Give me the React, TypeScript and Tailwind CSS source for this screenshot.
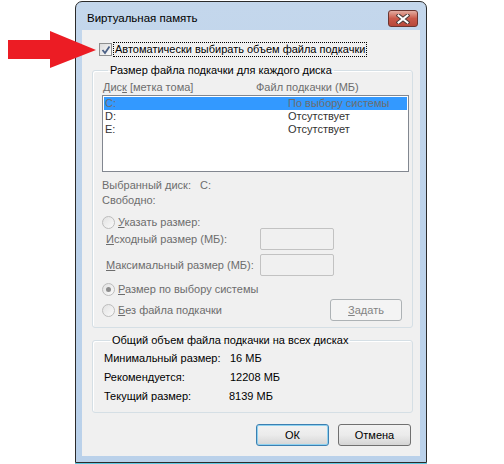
import React from "react";

const font = { fontFamily: '"Liberation Sans", Arial, sans-serif' };

const Radio = ({ checked = false }: { checked?: boolean }) => (
    <span className="relative inline-block w-[13px] h-[13px] rounded-full border border-[#bcbcbc] bg-gradient-to-br from-[#e2e2e2] to-[#fafafa] shrink-0">
        {checked && (
            <span className="absolute left-[3px] top-[3px] w-[5px] h-[5px] rounded-full bg-[#8c8c8c]" />
        )}
    </span>
);

const GroupBox = ({
    title,
    className,
    children,
}: {
    title: string;
    className?: string;
    children: React.ReactNode;
}) => (
    <fieldset className={"border border-[#d5dfe5] rounded-[3px] shadow-[inset_1px_1px_0_#ffffff] shrink-0 " + (className ?? "")}>
        <legend className="ml-[6px] px-[2px] text-black leading-[14px] whitespace-nowrap">{title}</legend>
        {children}
    </fieldset>
);

const App = () => {
    return (
        <div className="relative w-[504px] h-[464px] bg-white text-[11px] text-black whitespace-nowrap" style={font}>
            {/* red arrow pointing at the checkbox */}
            <svg className="absolute left-[8px] top-[31px]" width="90" height="38" viewBox="0 0 90 38">
                <polygon points="0,9 42,9 42,0 88,19 42,37 42,28 0,28" fill="#ec1c24" />
            </svg>

            <div className="ml-[75px] pt-[1px] w-[352px]">
                <div className="h-[462px] rounded-t-[7px] border border-[#2b2b2b] bg-gradient-to-b from-[#c4d7ec] via-[#bcd2ea] to-[#bad1ea] flex flex-col px-[6px] shadow-[0_1px_0_#5fc8e0]">
                    {/* title bar */}
                    <div className="h-[28px] flex justify-between pl-[5px] pr-[2px] shrink-0">
                        <span className="text-[11.5px] text-black mt-[9px] leading-[14px]">Виртуальная память</span>
                        <button className="w-[30px] h-[17px] mt-[8px] rounded-[3px] border border-[#6b3530] bg-gradient-to-b from-[#e2ada2] via-[#c9594a] to-[#b8483a] flex items-center justify-center">
                            <svg width="14" height="10" viewBox="0 0 14 10">
                                <path d="M2.5 1.5 L11.5 8.5 M11.5 1.5 L2.5 8.5" stroke="#4a3a38" strokeWidth="4" strokeLinecap="square" />
                                <path d="M2.5 1.5 L11.5 8.5 M11.5 1.5 L2.5 8.5" stroke="#ffffff" strokeWidth="2" strokeLinecap="square" />
                            </svg>
                        </button>
                    </div>

                    {/* client area */}
                    <div className="flex-1 mb-[6px] bg-[#f0f0f0] flex flex-col pl-[10px] pr-[7px]">
                        <div className="flex items-center mt-[12px] ml-[7px] h-[15px]">
                            <span className="relative w-[13px] h-[13px] border border-[#8e8f8f] bg-gradient-to-br from-[#dcdcdc] to-[#fbfbfb] shrink-0">
                                <svg className="absolute left-[1px] top-[1px]" width="10" height="10" viewBox="0 0 10 10">
                                    <path d="M1.5 5 L4 8 L8.5 1.5" stroke="#4c6186" strokeWidth="1.8" fill="none" />
                                </svg>
                            </span>
                            <span className="ml-[1px] px-[1px] border border-dotted border-black leading-[13px]">
                                Автоматически выбирать объем файла подкачки
                            </span>
                        </div>

                        <GroupBox title="Размер файла подкачки для каждого диска" className="mt-[6px] h-[265px] pl-[9px] pr-[3px]">
                            <div className="flex text-[#6d6d6d] mt-[3px] leading-[14px]">
                                <span className="w-[154px] pl-[1px]">
                                    Дис<span className="underline">к</span> [метка тома]
                                </span>
                                <span>Файл подкачки (МБ)</span>
                            </div>
                            <div className="mt-[1px] h-[77px] border border-[#828790] bg-white pt-[1px] px-[1px] leading-[13px]">
                                <div className="flex h-[13px] bg-[#3399ff] text-[#6d6d6d]">
                                    <span className="w-[184px] pl-[1px]">C:</span>
                                    <span>По выбору системы</span>
                                </div>
                                <div className="flex h-[13px] text-[#333333]">
                                    <span className="w-[184px] pl-[1px]">D:</span>
                                    <span>Отсутствует</span>
                                </div>
                                <div className="flex h-[13px] text-[#333333]">
                                    <span className="w-[184px] pl-[1px]">E:</span>
                                    <span>Отсутствует</span>
                                </div>
                            </div>

                            <div className="mt-[6px] text-[#6d6d6d] leading-[15px]">
                                <div className="flex">
                                    <span className="w-[98px]">Выбранный диск:</span>
                                    <span>C:</span>
                                </div>
                                <div>Свободно:</div>
                            </div>

                            <div className="mt-[6px] flex items-center h-[16px] text-[#6d6d6d]">
                                <Radio />
                                <span className="ml-[3px]">
                                    <span className="underline">У</span>казать размер:
                                </span>
                            </div>

                            <div className="flex items-center justify-between -mt-[2px] h-[22px] pl-[4px] pr-[75px] text-[#6d6d6d]">
                                <span>
                                    <span className="underline">И</span>сходный размер (МБ):
                                </span>
                                <span className="w-[74px] h-[22px] border border-[#c2c2c2] rounded-[2px] bg-[#f0f0f0]" />
                            </div>
                            <div className="flex items-center justify-between mt-[4px] h-[22px] pl-[4px] pr-[75px] text-[#6d6d6d]">
                                <span>
                                    <span className="underline">М</span>аксимальный размер (МБ):
                                </span>
                                <span className="w-[74px] h-[22px] border border-[#c2c2c2] rounded-[2px] bg-[#f0f0f0]" />
                            </div>

                            <div className="mt-[5px] flex items-center h-[16px] text-[#6d6d6d]">
                                <Radio checked />
                                <span className="ml-[3px]">
                                    <span className="underline">Р</span>азмер по выбору системы
                                </span>
                            </div>
                            <div className="flex items-center justify-between mt-[2px] pr-[7px]">
                                <div className="flex items-center h-[16px] text-[#6d6d6d]">
                                    <Radio />
                                    <span className="ml-[3px]">
                                        <span className="underline">Б</span>ез файла подкачки
                                    </span>
                                </div>
                                <button className="w-[72px] h-[22px] border border-[#adb2b5] rounded-[3px] bg-[#f4f4f4] text-[#838383]">
                                    <span className="underline">З</span>адать
                                </button>
                            </div>
                        </GroupBox>

                        <GroupBox title="Общий объем файла подкачки на всех дисках" className="mt-[5px] h-[80px] px-[11px]">
                            <div className="flex flex-col gap-[4px] mt-[4px] leading-[15px]">
                                <div className="flex">
                                    <span className="w-[126px]">Минимальный размер:</span>
                                    <span>16 МБ</span>
                                </div>
                                <div className="flex">
                                    <span className="w-[126px]">Рекомендуется:</span>
                                    <span>12208 МБ</span>
                                </div>
                                <div className="flex">
                                    <span className="w-[125px]">Текущий размер:</span>
                                    <span>8139 МБ</span>
                                </div>
                            </div>
                        </GroupBox>

                        <div className="flex justify-end gap-[9px] mt-[11px] pr-[2px]">
                            <button className="w-[73px] h-[22px] rounded-[3px] border border-[#3c7fb1] bg-gradient-to-b from-[#f2f2f2] via-[#ebebeb] to-[#d5d5d5] shadow-[inset_0_0_0_1px_#8fd2f0]">
                                ОК
                            </button>
                            <button className="w-[73px] h-[22px] rounded-[3px] border border-[#707070] bg-gradient-to-b from-[#f2f2f2] via-[#ebebeb] to-[#d5d5d5]">
                                Отмена
                            </button>
                        </div>
                    </div>
                </div>
            </div>
        </div>
    );
};

export default App;
